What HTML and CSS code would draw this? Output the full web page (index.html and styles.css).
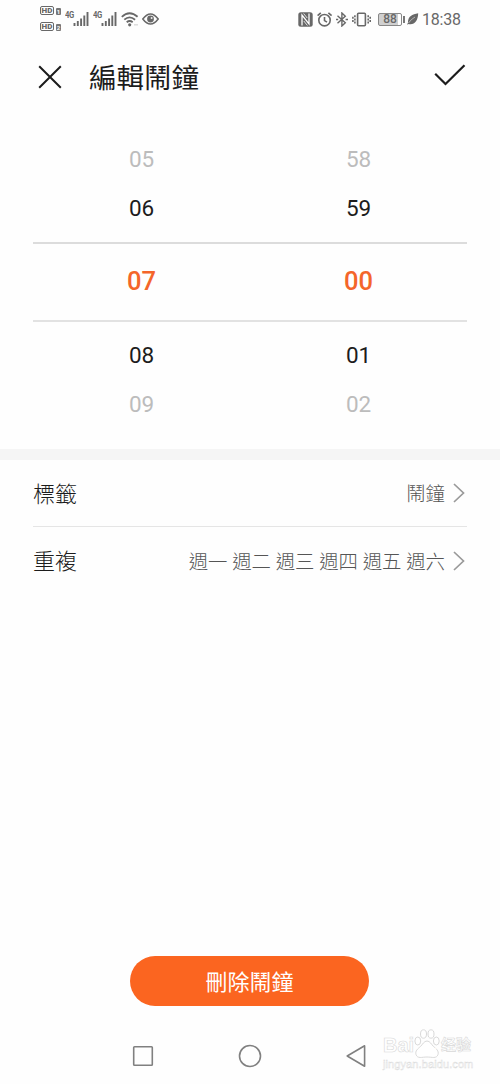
FILE: index.html
```html
<!DOCTYPE html>
<html lang="zh-Hant">
<head>
<meta charset="utf-8">
<title>編輯鬧鐘</title>
<link rel="stylesheet" href="styles.css">
</head>
<body>
<div class="screen">
  <div class="status">
    <div class="status-side">
      <div class="sims">
        <div class="sim"><span class="hd">HD</span><span class="slot">1</span></div>
        <div class="sim"><span class="hd">HD</span><span class="slot">2</span></div>
      </div>
      <div class="cell"><span class="net">4G</span>
        <svg width="16" height="16" viewBox="0 0 16 16"><path d="M1.5 15v-3M4.800 15v-5M8.100 15V7.500M11.300 15V4.500M14.500 15V1" fill="none" stroke="#686868" stroke-width="1.900"/></svg>
      </div>
      <div class="cell"><span class="net">4G</span>
        <svg width="16" height="16" viewBox="0 0 16 16"><path d="M1.5 15v-3M4.800 15v-5M8.100 15V7.500M11.300 15V4.500M14.500 15V1" fill="none" stroke="#686868" stroke-width="1.900"/></svg>
      </div>
      <svg class="wifi" width="18" height="15" viewBox="0 0 18 15"><g fill="none" stroke="#686868" stroke-width="1.800"><path d="M.8 4.800Q8.500-2.300 16.600 4.800M3.300 7.700q5.200-4.700 10.800 0M5.700 10.300q3-2.500 6 0"/></g><circle cx="8.700" cy="12.800" r="1.600" fill="#686868"/><path d="M13 12.800h4" stroke="#ddd" stroke-width="1.500"/></svg>
      <svg class="eye" width="17" height="12" viewBox="0 0 17 12"><path d="M.8 6Q8.500-4.200 16.200 6 8.500 16.200.8 6Z" fill="none" stroke="#686868" stroke-width="1.500"/><circle cx="8.500" cy="6" r="3.400" fill="#686868"/><circle cx="9.600" cy="4.900" r="1" fill="#eee"/></svg>
    </div>
    <div class="status-side">
      <svg class="nfc" width="15" height="15" viewBox="0 0 15 15"><rect x=".3" y=".3" width="14.400" height="14.400" rx="2.500" fill="#686868"/><path d="M4 13.500V3.200L11 11.800V1.500" fill="none" stroke="#fff" stroke-width="1.300"/><path d="M5.600 1.500 9.200 6M5.800 9l3.600 4.500" fill="none" stroke="#fff" stroke-width=".8"/></svg>
      <svg class="clock" width="16" height="15" viewBox="0 0 16 15"><g fill="none" stroke="#686868" stroke-width="1.600"><circle cx="7.500" cy="8.200" r="5.700"/><path d="M7.500 5v3.600l2.500 1.600M.6 3.700 3.800.8M11.400.8l3.200 2.900"/></g></svg>
      <svg class="bt" width="12" height="15" viewBox="0 0 12 15"><path d="M1.500 3.700 9.300 10.800 5.900 14V1l3.400 3.200-7.800 7.100" fill="none" stroke="#686868" stroke-width="1.400"/><path d="M0 7.500h2.200M9.600 7.500H12" stroke="#686868" stroke-width="1.700"/></svg>
      <svg class="vib" width="20" height="15" viewBox="0 0 20 15"><g fill="none" stroke="#686868" stroke-width="1.600"><rect x="5.600" y="1.200" width="7.800" height="12.600" rx="1"/><path d="M2.900 3.200v8.600M16.200 3.200v8.600" stroke-dasharray="2 1.200"/><path d="M.9 4.800v5.400M18.200 4.800v5.400" stroke-dasharray="2 1.200"/></g></svg>
      <div class="battery">88</div><i class="cap"></i>
      <svg class="leaf" width="12" height="12" viewBox="0 0 12 12"><path d="M11.200.3C5 1.200.8 3.800 1 9.500L0 11.800l1.600-.7C7.500 12.300 11 8 11.200.3Z" fill="#686868"/><path d="M1.500 10Q4 6.300 8 4" fill="none" stroke="#fff" stroke-width=".5"/></svg>
      <span class="time">18:38</span>
    </div>
  </div>

  <div class="header">
    <svg class="close" width="24" height="24" viewBox="0 0 24 24"><path d="M1.200 1.200 22.800 22.800M22.800 1.200 1.200 22.800" fill="none" stroke="#1c1c1c" stroke-width="2"/></svg>
    <h1 class="title">編輯鬧鐘</h1>
    <svg class="check" width="32" height="22" viewBox="0 0 32 22"><path d="M1.200 9.800 11.500 20 30.500 1.200" fill="none" stroke="#1c1c1c" stroke-width="2.200"/></svg>
  </div>

  <div class="picker">
    <div class="row faint"><span>05</span><span>58</span></div>
    <div class="row"><span>06</span><span>59</span></div>
    <div class="row selected"><span>07</span><span>00</span></div>
    <div class="row"><span>08</span><span>01</span></div>
    <div class="row faint"><span>09</span><span>02</span></div>
  </div>

  <div class="band"></div>

  <div class="settings">
    <div class="item"><span class="label">標籤</span><span class="value">鬧鐘</span>
      <svg class="chevron" width="12" height="20" viewBox="0 0 12 20"><path d="M1 1l9.500 9L1 19" fill="none" stroke="#9a9a9a" stroke-width="1.700"/></svg></div>
    <div class="item"><span class="label">重複</span><span class="value">週一 週二 週三 週四 週五 週六</span>
      <svg class="chevron" width="12" height="20" viewBox="0 0 12 20"><path d="M1 1l9.500 9L1 19" fill="none" stroke="#9a9a9a" stroke-width="1.700"/></svg></div>
  </div>

  <button class="delete">刪除鬧鐘</button>

  <div class="nav">
    <svg width="22" height="24" viewBox="0 0 22 24"><rect x="1.700" y="2.700" width="18.600" height="18.600" rx=".8" fill="none" stroke="#808080" stroke-width="1.600"/></svg>
    <svg width="24" height="24" viewBox="0 0 24 24"><circle cx="12" cy="12" r="10.500" fill="none" stroke="#808080" stroke-width="1.600"/></svg>
    <svg width="20" height="24" viewBox="0 0 20 24"><path d="M18.600 1.800v20.400L1.200 12Z" fill="none" stroke="#808080" stroke-width="1.600" stroke-linejoin="round"/></svg>
  </div>

  <div class="watermark">
    <div class="brand"><span class="bai">Bai</span>
      <svg width="26" height="29" viewBox="0 0 26 29"><g fill="#fff" stroke="#d9d9d9" stroke-width="1"><ellipse cx="3.800" cy="12" rx="2.900" ry="4"/><ellipse cx="9.500" cy="5" rx="3" ry="4.200"/><ellipse cx="17" cy="5" rx="3" ry="4.200"/><ellipse cx="22.300" cy="12" rx="2.900" ry="4"/><path d="M13 12c3 0 4.500 3.500 6.500 5.500 3 2.500 5.500 4.500 4.500 8-1.500 4.500-6 2.500-11 2.500s-9.500 2-11-2.500c-1-3.500 1.500-5.500 4.500-8C8.500 15.500 10 12 13 12Z"/></g><text class="du" x="6" y="26">du</text></svg>
      <span class="jy">经验</span></div>
    <div class="site">jingyan.baidu.com</div>
  </div>
</div>
</body>
</html>
```

FILE: styles.css
```css
* { box-sizing: border-box; }
body { margin: 0; background: #fefefe; font-family: Roboto, "Noto Sans CJK TC", sans-serif; color: #1c1c1c; }
svg { display: block; flex: none; }
.screen { position: relative; width: 500px; height: 1084px; display: flex; flex-direction: column; overflow: hidden; }

.status { height: 38px; padding: 0 39px 0 40px; display: flex; justify-content: space-between; color: #686868; }
.status-side { display: flex; align-items: center; }
.sims { width: 21px; display: flex; flex-direction: column; gap: 6px; }
.sim { display: flex; align-items: flex-end; gap: 2px; height: 10px; padding-bottom: 1px; }
.hd { width: 14px; height: 9px; border: 1px solid #686868; border-radius: 2px; font: 900 8px/7px Roboto, sans-serif; text-align: center; }
.slot { width: 5px; height: 7px; border-radius: 1px; background: #777; color: #fff; font: 700 6px/7px Roboto, sans-serif; text-align: center; }
.cell { display: flex; width: 24px; margin-left: 4px; }
.net { width: 8px; font: 700 9px/9px "Liberation Sans Narrow", Roboto, sans-serif; letter-spacing: -.5px; white-space: nowrap; transform: scaleX(.85); transform-origin: left; }
.wifi { margin-left: 4px; }
.eye { margin-left: 3px; }
.clock { margin-left: 4px; }
.bt { margin-left: 3px; }
.vib { margin-left: 4px; }
.battery { width: 24px; height: 13px; margin-left: 6px; border: 1px solid #888; border-radius: 2px; background: linear-gradient(90deg, #d0d0d0 19px, #fff 19px); font: 500 12px/11px Roboto, sans-serif; text-align: center; }
.cap { width: 2px; height: 7px; margin-left: 1px; background: #777; }
.leaf { margin-left: 2px; }
.time { margin-left: 3px; width: 39px; padding-top: 1px; font-size: 16px; letter-spacing: -.2px; line-height: 20px; white-space: nowrap; }

.header { height: 78px; padding: 0 34px 0 38px; display: flex; align-items: center; }
.title { margin: 0 0 0 27px; padding-top: 3px; flex: 1; font-size: 27.500px; line-height: 40px; font-weight: 400; }
.check { margin-top: -4px; }

.picker { margin: 0 33px; padding-top: 19px; height: 333px; }
.row { display: grid; grid-template-columns: 1fr 1fr; height: 49px; padding-bottom: 2px; align-items: center; text-align: center; font-size: 22.500px; line-height: 30px; letter-spacing: -.1px; }
.row.faint { color: #bcbcbc; }
.row.selected { height: 80px; margin: 9px 0; border-top: 2px solid #dcdcdc; border-bottom: 2px solid #e2e2e2; color: #f4652a; font-size: 25.500px; font-weight: 500; }

.band { height: 11px; background: #f5f5f5; }
.settings { padding: 0 33px; }
.item { height: 66px; display: flex; align-items: center; }
.item + .item { height: 68px; border-top: 1px solid #e5e5e5; }
.label { flex: 1; padding-bottom: 3px; font-size: 22px; font-weight: 300; }
.value { padding-bottom: 1px; font-size: 19.400px; font-weight: 300; color: #555; white-space: nowrap; }
.chevron { margin: 0 2px 0 8px; }

.delete { width: 239px; height: 50px; margin: auto 131px 0 130px; border: 0; border-radius: 25px; padding: 3px 0 0; background: #fb6520; color: #fff; font: 400 22px/30px Roboto, "Noto Sans CJK TC", sans-serif; }
.nav { height: 78px; padding: 22px 134px 0 132px; display: flex; justify-content: space-between; align-items: center; }

.watermark { position: absolute; left: 383px; top: 1029px; width: 92px; color: #fff; font-family: "Liberation Sans", "Noto Sans CJK SC", sans-serif; -webkit-text-stroke: .6px #d9d9d9; }
.brand { height: 29px; display: flex; align-items: flex-end; font-size: 20px; font-weight: 700; line-height: 26px; }
.bai { width: 31px; }
.du { font: italic 700 13px "Liberation Sans", sans-serif; fill: #fff; }
.jy { margin-left: 1px; font-size: 15px; }
.site { margin-top: -1px; font-size: 11px; line-height: 14px; letter-spacing: .1px; -webkit-text-stroke-width: .4px; }
```
